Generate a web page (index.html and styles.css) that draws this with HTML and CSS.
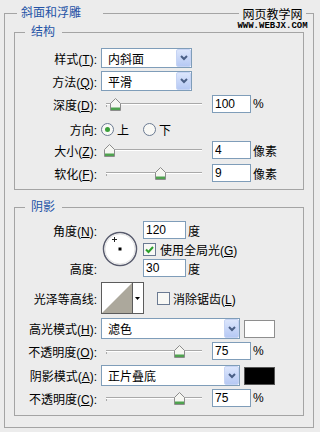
FILE: index.html
```html
<!DOCTYPE html>
<html lang="zh-CN">
<head>
    <meta charset="UTF-8">
    <meta name="viewport" content="width=device-width, initial-scale=1.0">
    <title>斜面和浮雕</title>
    <link rel="stylesheet" href="styles.css">
</head>
<body>
    <div class="mark">
        <div class="mark-cn">网页教学网</div>
        <div class="mark-en">WWW.WEBJX.COM</div>
    </div>

    <fieldset class="group outer">
        <legend>斜面和浮雕</legend>

        <fieldset class="group inner">
            <legend>结构</legend>
            <div class="rows">
                <div class="row">
                    <span class="lbl">样式(<u>T</u>):</span>
                    <div class="select"><span>内斜面</span><i class="drop"><svg width="8" height="6" viewBox="0 0 8 6"><path d="M1 1l3 3 3-3" fill="none" stroke="#4a5f86" stroke-width="2"/></svg></i></div>
                </div>
                <div class="row">
                    <span class="lbl">方法(<u>Q</u>):</span>
                    <div class="select"><span>平滑</span><i class="drop"><svg width="8" height="6" viewBox="0 0 8 6"><path d="M1 1l3 3 3-3" fill="none" stroke="#4a5f86" stroke-width="2"/></svg></i></div>
                </div>
                <div class="row">
                    <span class="lbl">深度(<u>D</u>):</span>
                    <div class="slider"><span class="thumb" style="left:9px"><svg width="11" height="13" viewBox="0 0 11 13"><path d="M.5 5.5l5-5 5 5v7H.5z" fill="#f6f6f2" stroke="#8c8c8c"/><path d="M1 9.5h9V12H1z" fill="#4fa24f"/></svg></span></div>
                    <input class="num" type="text" value="100">
                    <span class="unit">%</span>
                </div>
                <div class="row dir">
                    <span class="lbl">方向:</span>
                    <svg class="radio" width="13" height="13" viewBox="0 0 13 13"><circle cx="6.5" cy="6.5" r="6" fill="#f8f8f5" stroke="#6b7a92"/><circle cx="6.5" cy="6.5" r="2.5" fill="#3a9f3a"/></svg>
                    <span class="opt">上</span>
                    <svg class="radio second" width="13" height="13" viewBox="0 0 13 13"><circle cx="6.5" cy="6.5" r="6" fill="#f8f8f5" stroke="#6b7a92"/></svg>
                    <span class="opt">下</span>
                </div>
                <div class="row">
                    <span class="lbl">大小(<u>Z</u>):</span>
                    <div class="slider"><span class="thumb" style="left:3px"><svg width="11" height="13" viewBox="0 0 11 13"><path d="M.5 5.5l5-5 5 5v7H.5z" fill="#f6f6f2" stroke="#8c8c8c"/><path d="M1 9.5h9V12H1z" fill="#4fa24f"/></svg></span></div>
                    <input class="num" type="text" value="4">
                    <span class="unit">像素</span>
                </div>
                <div class="row">
                    <span class="lbl">软化(<u>F</u>):</span>
                    <div class="slider"><span class="thumb" style="left:54px"><svg width="11" height="13" viewBox="0 0 11 13"><path d="M.5 5.5l5-5 5 5v7H.5z" fill="#f6f6f2" stroke="#8c8c8c"/><path d="M1 9.5h9V12H1z" fill="#4fa24f"/></svg></span></div>
                    <input class="num" type="text" value="9">
                    <span class="unit">像素</span>
                </div>
            </div>
        </fieldset>

        <fieldset class="group inner shadow">
            <legend>阴影</legend>
            <div class="rows">
                <div class="angle">
                    <span class="lbl">角度(<u>N</u>):</span>
                    <svg class="dial" width="36" height="36" viewBox="0 0 36 36"><circle cx="18" cy="18" r="16.5" fill="#fff" stroke="#585b6d" stroke-width="1.5"/><circle cx="18" cy="18" r="15" fill="none" stroke="#e2e2e2"/><rect x="16.5" y="16.5" width="3" height="3" fill="#000"/><path d="M12.5 6v5M10 8.5h5" stroke="#222"/></svg>
                    <div class="cell"><input class="num deg" type="text" value="120"><span class="unit">度</span></div>
                    <div class="cell"><svg class="check" width="13" height="13" viewBox="0 0 13 13"><rect x=".5" y=".5" width="12" height="12" fill="#f8f8f5" stroke="#6b7a92"/><path d="M3 6.5l2.5 2.5 4.5-5" fill="none" stroke="#2a9f2a" stroke-width="2"/></svg><span>使用全局光(<u>G</u>)</span></div>
                    <span class="lbl">高度:</span>
                    <div class="cell"><input class="num deg" type="text" value="30"><span class="unit">度</span></div>
                </div>
                <div class="row tall">
                    <span class="lbl">光泽等高线:</span>
                    <svg class="contour" width="43" height="32" viewBox="0 0 43 32"><rect x=".5" y=".5" width="42" height="31" fill="#fff" stroke="#5c5c5c"/><path d="M1 31L31 1v30z" fill="#aca89c"/><path d="M31.5 1v30" stroke="#5c5c5c"/><path d="M34 15h5l-2.5 3z" fill="#000"/></svg>
                    <svg class="check far" width="13" height="13" viewBox="0 0 13 13"><rect x=".5" y=".5" width="12" height="12" fill="#f8f8f5" stroke="#6b7a92"/></svg>
                    <span>消除锯齿(<u>L</u>)</span>
                </div>
                <div class="row mode">
                    <span class="lbl">高光模式(<u>H</u>):</span>
                    <div class="select wide"><span>滤色</span><i class="drop"><svg width="8" height="6" viewBox="0 0 8 6"><path d="M1 1l3 3 3-3" fill="none" stroke="#4a5f86" stroke-width="2"/></svg></i></div>
                    <span class="swatch"></span>
                </div>
                <div class="row short">
                    <span class="lbl">不透明度(<u>O</u>):</span>
                    <div class="slider"><span class="thumb" style="left:73px"><svg width="11" height="13" viewBox="0 0 11 13"><path d="M.5 5.5l5-5 5 5v7H.5z" fill="#f6f6f2" stroke="#8c8c8c"/><path d="M1 9.5h9V12H1z" fill="#4fa24f"/></svg></span></div>
                    <input class="num" type="text" value="75">
                    <span class="unit">%</span>
                </div>
                <div class="row mode gap5">
                    <span class="lbl">阴影模式(<u>A</u>):</span>
                    <div class="select wide"><span>正片叠底</span><i class="drop"><svg width="8" height="6" viewBox="0 0 8 6"><path d="M1 1l3 3 3-3" fill="none" stroke="#4a5f86" stroke-width="2"/></svg></i></div>
                    <span class="swatch black"></span>
                </div>
                <div class="row short">
                    <span class="lbl">不透明度(<u>C</u>):</span>
                    <div class="slider"><span class="thumb" style="left:73px"><svg width="11" height="13" viewBox="0 0 11 13"><path d="M.5 5.5l5-5 5 5v7H.5z" fill="#f6f6f2" stroke="#8c8c8c"/><path d="M1 9.5h9V12H1z" fill="#4fa24f"/></svg></span></div>
                    <input class="num" type="text" value="75">
                    <span class="unit">%</span>
                </div>
            </div>
        </fieldset>
    </fieldset>
</body>
</html>
```

FILE: styles.css
```css
body { margin: 0; background: #ececec; color: #000; font: 12px "Liberation Sans", "Noto Sans CJK SC", sans-serif; position: relative; }
u { text-underline-offset: 1px; }

/* watermark in the top right corner */
.mark { position: absolute; left: 239px; top: 6px; width: 67px; height: 26px; background: #ececec; text-align: center; white-space: nowrap; z-index: 1; }
.mark-cn { font: 12px/15px "Noto Sans CJK SC", sans-serif; }
.mark-en { font: bold 9px/10px "Liberation Mono", monospace; margin: 0 -5px; }

/* group boxes */
.group { border: 1px solid #a4a4a4; margin: 0; min-width: 0; }
.group > legend { line-height: 15px; color: #2453a6; padding: 0 7px 0 6px; margin-left: 10px; }
.outer { width: 310px; box-sizing: border-box; margin: 6px 0 0 4px; padding: 4px 9px 11px; }
.outer > legend { margin-left: 3px; padding: 0 22px 0 4px; }
.inner { padding: 8px 0 6px; }
.shadow { margin-top: 10px; padding: 6px 0 8px; }

.rows { display: flex; flex-direction: column; gap: 3px; }
.row { display: flex; align-items: center; height: 20px; }
.row.dir { margin: 2px 0 -2px; }
.row.tall { height: 32px; margin-top: 2px; }
.row.mode { height: 21px; margin-top: 1px; }
.row.short { height: 18px; }
.row.gap5 { margin-top: 2px; }
.lbl { width: 82px; margin-right: 4px; text-align: right; flex: none; white-space: nowrap; }

/* dropdowns */
.select { display: flex; align-items: center; justify-content: space-between; box-sizing: border-box; width: 91px; height: 20px; border: 1px solid #7f9db9; background: #fff; padding-left: 6px; }
.select.wide { width: 139px; height: 21px; }
.drop { display: flex; align-items: center; justify-content: center; box-sizing: border-box; width: 15px; height: 100%; border: 1px solid #c6d4f4; border-radius: 2px; background: linear-gradient(#dce6fc, #b6c9f4); }

/* sliders */
.slider { position: relative; width: 107px; height: 20px; flex: none;
    background: linear-gradient(#a9a9a9, #a9a9a9) no-repeat 5px 9px / 96px 1px,
                linear-gradient(#fff, #fff) no-repeat 5px 10px / 96px 1px,
                linear-gradient(#a9a9a9, #a9a9a9) no-repeat 5px 9px / 1px 4px; }
.thumb { position: absolute; top: 4px; width: 11px; height: 13px; }
.thumb svg { display: block; }

.num { box-sizing: border-box; width: 39px; height: 18px; margin: 0 0 0 4px; padding: 0 2px; border: 1px solid #7f9db9; background: #fff; font: inherit; color: #000; outline: none; }
.num.deg { width: 43px; margin: 0; }
.unit { margin-left: 2px; }

.radio { flex: none; }
.radio.second { margin-left: 14px; }
.opt { margin-left: 3px; }

/* angle block */
.angle { display: grid; grid-template-columns: 82px 38px auto; grid-template-rows: 18px 14px 18px; column-gap: 4px; row-gap: 3px; align-items: center; }
.angle .lbl { margin-right: 0; }
.angle .lbl:first-child { grid-row: 1; grid-column: 1; }
.angle .lbl:nth-of-type(2) { grid-row: 3; grid-column: 1; }
.dial { grid-column: 2; grid-row: 1 / 4; align-self: start; margin: 10px 0 0 1px; }
.cell { display: flex; align-items: center; grid-column: 3; }
.check { flex: none; margin-right: 4px; }
.check.far { margin-left: 13px; margin-right: 3px; }
.contour { flex: none; display: block; }

.swatch { width: 31px; height: 18px; box-sizing: border-box; margin-left: 4px; border: 1px solid #8e8e8e; background: #fff; }
.swatch.black { background: #000; border-color: #555; }
```
